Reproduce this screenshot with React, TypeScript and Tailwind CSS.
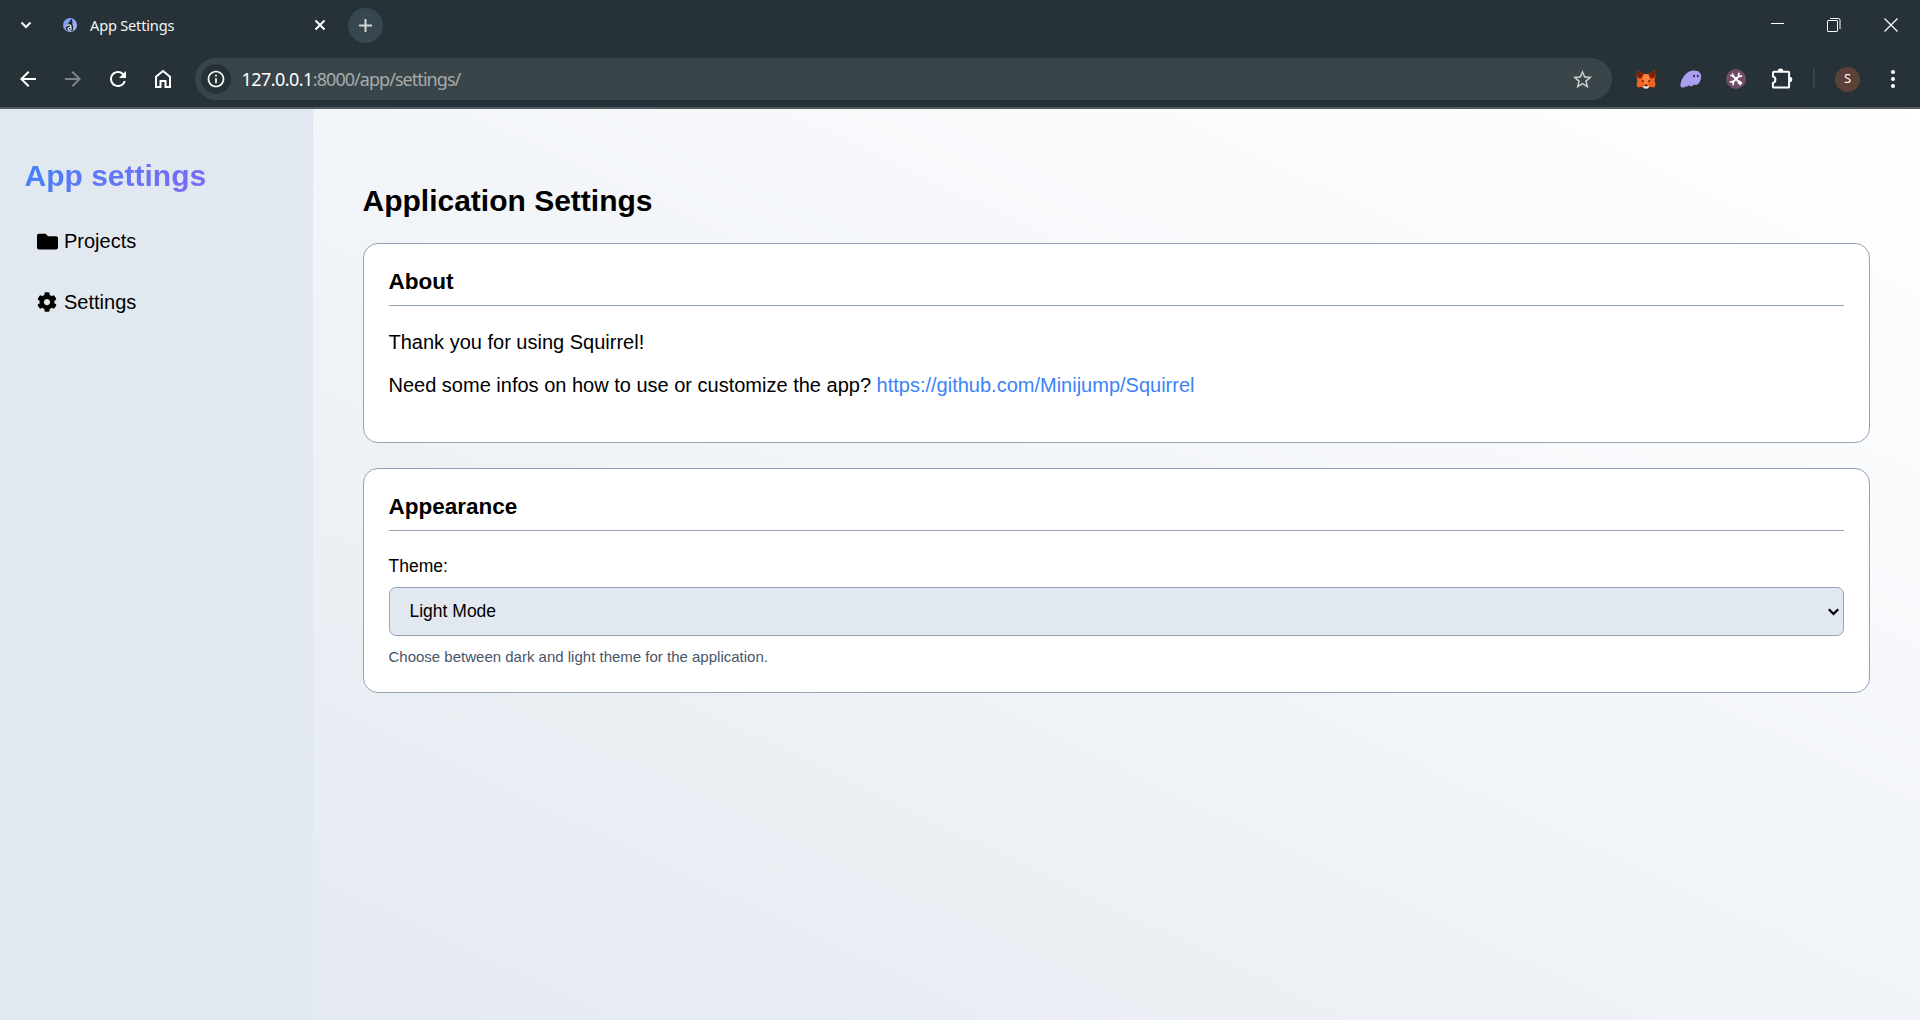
import React from "react";
import { FaFolder, FaCog } from "react-icons/fa";
import {
  MdArrowBack,
  MdArrowForward,
  MdRefresh,
  MdInfoOutline,
  MdStarBorder,
} from "react-icons/md";

function Favicon() {
  return (
    <svg width="14" height="14" viewBox="0 0 14 14">
      <defs>
        <linearGradient id="fav" x1="0" y1="0" x2="1" y2="1">
          <stop offset="0" stopColor="#6f97ee" />
          <stop offset="1" stopColor="#b4b8f8" />
        </linearGradient>
      </defs>
      <circle cx="7" cy="7" r="7" fill="url(#fav)" />
      <path d="M8.500.9C6.800 1.800 7.200 3.800 5.600 5 3.800 6.300 2.500 8.500 2.800 11l2 2h4.700c.9-2 .9-4.500.1-6.300C9 5 10 3 8.500.9Z" fill="#1d2a35" />
      <path d="M3.400 8.400C4 6.600 7.200 6.200 8 8v4.200M8 9.600C6.500 8.800 4.800 9.500 5 11c.2 1.400 2.400 1.500 3 .2" fill="none" stroke="#f4f7fb" strokeWidth="1.100" />
    </svg>
  );
}

function Fox() {
  return (
    <svg width="20" height="19" viewBox="0 0 20 19">
      <path d="M1.200 0 7.800 4.300h4.400L18.800 0l.7 6-.9 4.500.9 4.200-1.100 2.800-3.900-.8-2 1.600h-5l-2-1.600-3.900.8L.5 14.700l.9-4.200L.5 6Z" fill="#f5641e" />
      <path d="M1.200 0 7.600 4.200 5.200 8.500 2.500 8.300.5 6ZM18.800 0l-6.400 4.200 2.400 4.300 2.700-.2 2-2.300Z" fill="#7a2108" />
      <path d="M7.800 4.300h4.400l1 5.200L11.500 14h-3L6.800 9.500Z" fill="#ff8345" />
      <path d="M5.600 9.800 8 11l-.3.900-1.600-.4ZM14.400 9.800 12 11l.3.900 1.600-.4Z" fill="#33150f" />
      <path d="M7 15.500h6l-1.200 3H8.200Z" fill="#e8e6e4" />
      <path d="M8.700 14.800h2.600l.3 1.400H8.400Z" fill="#33150f" />
    </svg>
  );
}

function Ghost() {
  return (
    <svg width="22" height="18" viewBox="0 0 22 18">
      <path d="M.4 15.500C1 8 6.500.6 14 .6c5 0 7.400 2.900 7.100 6.500-.3 4.200-2.600 7.900-5.200 7.900-1 0-1.500-.5-1.600-1.100-.8 1.300-2 2.300-3.400 2.300-1.100 0-1.600-.6-1.600-1.300-1.100 1.300-2.300 1.700-3.600 1.700-.5.500-1.600 1-2.900 1-1.400 0-2.400-.7-2.400-2.100Z" fill="#ab9ff2" />
      <ellipse cx="14" cy="6" rx="1" ry="1.300" fill="#2b3240" />
      <ellipse cx="17.800" cy="6" rx="1" ry="1.300" fill="#2b3240" />
    </svg>
  );
}

function Tools() {
  return (
    <svg width="20" height="20" viewBox="0 0 20 20">
      <circle cx="10" cy="10" r="10" fill="#714b67" />
      <g fill="none" stroke="#fff">
        <path d="M6.500 6.500l7 7M13.500 6.500l-7 7" strokeWidth="2" />
        <path d="M6.200 4.200 7.500 6.800 6.800 7.500 4.200 6.200" strokeWidth="1.400" />
        <path d="M13.200 3.800 12.500 6.200 13.800 7.500 16.200 6.800" strokeWidth="1.600" />
        <path d="M3.800 13.200 6.200 12.500 7.500 13.800 6.800 16.200" strokeWidth="1.600" />
        <path d="M12.500 12.500 15.300 15.300" strokeWidth="3.400" />
      </g>
    </svg>
  );
}

function Home() {
  return (
    <svg width="24" height="24" viewBox="0 0 24 24" fill="none" stroke="currentColor" strokeWidth="2">
      <path d="M5 20V9.800l7-5.800 7 5.800V20h-4.500v-6h-5v6Z" />
    </svg>
  );
}

function Puzzle() {
  return (
    <svg width="22" height="22" viewBox="0 0 22 22">
      <path
        d="M2 5.500A1 1 0 0 1 3 4.700h14.300a.8.800 0 0 1 .8.800v14.300a.8.800 0 0 1-.8.800H2.700a.8.800 0 0 1-.8-.8v-3.900a3.300 3.300 0 0 0 0-6.400Z"
        fill="none"
        stroke="#fff"
        strokeWidth="2"
        strokeLinejoin="round"
      />
      <path d="M6.700 4.200a2.800 2.800 0 0 1 5.600 0ZM18.600 9.800a2.700 2.700 0 0 1 0 5.400Z" fill="#fff" />
    </svg>
  );
}

function TabStrip() {
  return (
    <div className="flex h-[50px] items-center">
      <svg className="ml-[20px]" width="12" height="8" viewBox="0 0 12 8" fill="none" stroke="#fff" strokeWidth="2">
        <path d="M1.500 1.500 6 6l4.500-4.500" />
      </svg>
      <div className="ml-[31px] flex w-[263px] items-center">
        <Favicon />
        <span className="ml-[13px] text-[14.600px] leading-5 tracking-[-0.2px] text-[#f3f5f6]">App Settings</span>
        <svg className="ml-auto" width="12" height="12" viewBox="0 0 12 12" stroke="#fff" strokeWidth="2">
          <path d="M1.500 1.500l9 9M10.500 1.500l-9 9" />
        </svg>
      </div>
      <div className="ml-[22px] grid size-[35px] place-items-center rounded-full bg-[#37474f]">
        <svg width="13" height="13" viewBox="0 0 13 13" stroke="#d4d4d4" strokeWidth="2">
          <path d="M6.500 0v13M0 6.500h13" />
        </svg>
      </div>
      <div className="mr-[22px] mb-px ml-auto flex items-center gap-[42px]">
        <div className="mb-[2px] h-px w-[13px] bg-white" />
        <svg className="ml-px" width="14" height="14" viewBox="0 0 14 14" fill="none" stroke="#fff">
          <rect x=".5" y="2.500" width="10" height="11" rx=".6" />
          <path d="M3 .5h8.500a1.500 1.500 0 0 1 1.500 1.500V11" />
        </svg>
        <svg className="ml-px" width="14" height="14" viewBox="0 0 14 14" stroke="#fff" strokeWidth="1.200">
          <path d="M.5.5l13 13M13.500.5l-13 13" />
        </svg>
      </div>
    </div>
  );
}

function Toolbar() {
  return (
    <div className="flex h-[57px] items-start pt-[8px]">
      <div className="flex h-[42px] w-[195px] items-center gap-[21px] pl-[15.500px] text-white">
        <MdArrowBack size={24} />
        <MdArrowForward size={24} className="text-[#7d8488]" />
        <MdRefresh size={24} />
        <Home />
      </div>
      <div className="flex h-[42px] w-[1417px] items-center rounded-full bg-[#3a4549] pr-[18px] pl-[6px]">
        <div className="grid size-[30px] place-items-center rounded-full bg-[#263238] text-white">
          <MdInfoOutline size={20} />
        </div>
        <span className="ml-[10.500px] text-[18px] leading-6 tracking-[-0.95px] text-[#a5abad]">
          <span className="tracking-[-0.550px] text-white">127.0.0.1</span>:8000/app/settings/
        </span>
        <MdStarBorder size={23} className="ml-auto text-[#c9cccd]" />
      </div>
      <div className="flex h-[42px] items-center">
        <span className="ml-[23.500px]"><Fox /></span>
        <span className="ml-[24px]"><Ghost /></span>
        <span className="ml-[24px]"><Tools /></span>
        <span className="mb-[2px] ml-[25px]"><Puzzle /></span>
        <div className="ml-[20px] h-[20px] w-[2px] bg-[#37474f]" />
        <div className="ml-[20.500px] grid size-[25px] place-items-center rounded-full bg-[#5d4037] text-[13px] text-white">S</div>
        <svg className="ml-[30.500px]" width="4" height="18" viewBox="0 0 4 18" fill="#fff">
          <circle cx="2" cy="2" r="2" />
          <circle cx="2" cy="9" r="2" />
          <circle cx="2" cy="16" r="2" />
        </svg>
      </div>
    </div>
  );
}

function Sidebar() {
  return (
    <aside className="w-[313px] shrink-0 bg-[#e2e8f0] pl-[24.500px]">
      <h2 className="mt-[49px] w-[263px] bg-linear-135 from-[#3b82f6] to-[#8b5cf6] bg-clip-text text-[30px] leading-[35px] font-bold text-transparent">
        App settings
      </h2>
      <nav className="mt-[25px] flex flex-col pl-[12.500px] text-[20px]">
        <a className="flex h-[46px] items-center gap-[6px]">
          <FaFolder size={21} />
          Projects
        </a>
        <a className="mt-[15px] flex h-[46px] items-center gap-[6px]">
          <FaCog size={20} className="mr-px mb-px" />
          Settings
        </a>
      </nav>
    </aside>
  );
}

function Card({ title, className, children }: { title: string; className: string; children: React.ReactNode }) {
  return (
    <section className={"rounded-[15px] border border-[#94a3b8] bg-white px-[25px] " + className}>
      <h3 className="mt-[25px] h-[37px] border-b border-[#94a3b8] text-[22.500px] leading-[25px] font-bold">
        <span className="-ml-[0.5px]">{title}</span>
      </h3>
      {children}
    </section>
  );
}

export default function App() {
  return (
    <div className="flex h-[1020px] w-[1920px] flex-col overflow-hidden font-['Liberation_Sans',sans-serif] text-black">
      <header className="h-[109px] border-b-2 border-[#515b60] bg-[#263238] font-['Noto_Sans',sans-serif]">
        <TabStrip />
        <Toolbar />
      </header>
      <div className="flex min-h-0 flex-1 bg-linear-to-tr from-[#e2e8f0] to-white">
        <Sidebar />
        <main className="flex-1 pr-[50px] pl-[50px]">
          <h1 className="mt-[74px] -ml-[0.5px] text-[30px] leading-[35px] font-bold">Application Settings</h1>
          <Card title="About" className="mt-[25px] h-[200px]">
            <p className="mt-[25px] -ml-[0.5px] text-[20px] leading-[23px]">Thank you for using Squirrel!</p>
            <p className="mt-[20px] -ml-[0.5px] text-[20px] leading-[23px]">
              Need some infos on how to use or customize the app?{" "}
              <a className="text-[#3b82f6]">https://github.com/Minijump/Squirrel</a>
            </p>
          </Card>
          <Card title="Appearance" className="mt-[25px] h-[225px]">
            <p className="mt-[25px] -ml-[0.5px] text-[17.500px] leading-[20px]">Theme:</p>
            <div className="mt-[11px] flex h-[49px] items-center justify-between rounded-[7px] border border-[#94a3b8] bg-[#e2e8f0] pr-[4px] pl-[19.500px] text-[17.500px]">
              Light Mode
              <svg width="11" height="8" viewBox="0 0 11 8" fill="none" stroke="#000" strokeWidth="2.200">
                <path d="M.8 1.200 5.500 6l4.700-4.800" />
              </svg>
            </div>
            <p className="mt-[12px] -ml-[0.5px] text-[15px] leading-[17px] text-[#475569]">
              Choose between dark and light theme for the application.
            </p>
          </Card>
        </main>
      </div>
    </div>
  );
}
